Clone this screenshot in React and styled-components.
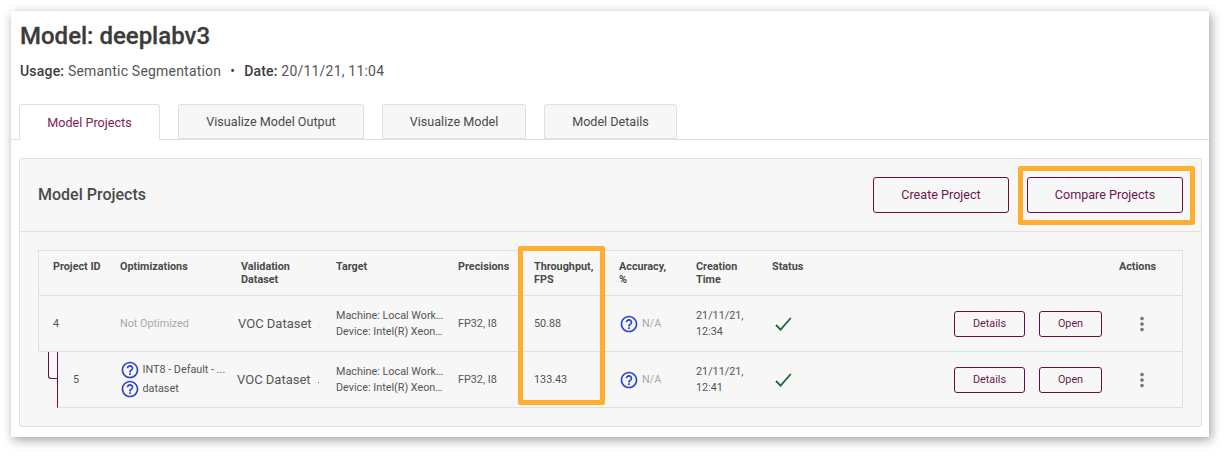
import styled, { createGlobalStyle } from 'styled-components'
import { MdHelpOutline, MdMoreVert } from 'react-icons/md'

const GlobalStyle = createGlobalStyle`
  html, body {
    margin: 0;
    padding: 0;
    background: #fff;
    font-family: Roboto, "Liberation Sans", sans-serif;
    color: #555;
  }
`

const Page = styled.div`
  position: relative;
  width: 1228px;
  height: 456px;
  padding: 11px 19px 0 11px;
  box-sizing: border-box;
  overflow: hidden;
`

const Card = styled.main`
  background: #fff;
  height: 426px;
  box-shadow: 2px 3px 10px rgba(0, 0, 0, 0.38);
  box-sizing: border-box;
`

const Header = styled.header`
  padding: 10px 9px 0;
  height: 93px;
  box-sizing: border-box;
`

const Title = styled.h1`
  margin: 0;
  font-size: 24px;
  line-height: 30px;
  font-weight: 500;
  color: #3c3c3c;
  -webkit-text-stroke: 0.3px #3c3c3c;
`

const Meta = styled.p`
  margin: 10px 0 0;
  font-size: 14px;
  line-height: 20px;
  letter-spacing: 0.2px;
  color: #555;

  b {
    font-weight: 500;
    color: #3c3c3c;
  }
`

const Bullet = styled.span`
  margin: 0 9px;
  color: #3c3c3c;
`

const Tabs = styled.nav`
  display: flex;
  gap: 18px;
  height: 35px;
  padding-left: 8px;
  border-bottom: 1px solid #e0e0e0;
`

const Tab = styled.div`
  width: ${p => p.$width}px;
  height: ${p => (p.$active ? 36 : 35)}px;
  padding-bottom: ${p => (p.$active ? 1 : 0)}px;
  box-sizing: border-box;
  display: flex;
  align-items: center;
  justify-content: center;
  font-size: 12.6px;
  color: ${p => (p.$active ? '#7d2456' : '#4a4a4a')};
  background: ${p => (p.$active ? '#fff' : '#f7f7f7')};
  border: 1px solid #e0e0e0;
  border-bottom: ${p => (p.$active ? 'none' : '1px solid #e0e0e0')};
  border-radius: 3px 3px 0 0;
`

const Panel = styled.section`
  margin: 18px 7px 0 8px;
  height: 269px;
  box-sizing: border-box;
  background: #f7f7f7;
  border: 1px solid #e0e0e0;
  border-radius: 3px;
`

const PanelHead = styled.div`
  display: flex;
  align-items: center;
  justify-content: space-between;
  height: 72px;
  padding: 0 18px;
  border-bottom: 1px solid #e0e0e0;
`

const PanelTitle = styled.h2`
  margin: 0 0 2px;
  font-size: 16px;
  font-weight: 500;
  color: #4a4a4a;
`

const ButtonRow = styled.div`
  display: flex;
  gap: ${p => p.$gap}px;
`

const Button = styled.button`
  width: ${p => p.$width}px;
  height: ${p => p.$height}px;
  padding: 0 0 1px;
  box-sizing: border-box;
  font-family: inherit;
  font-size: ${p => p.$size}px;
  color: #6b1a4a;
  background: transparent;
  border: 1px solid #6e0a44;
  border-radius: 3px;
`

const Table = styled.div`
  margin: 18px 18px 0;
  border-top: 1px solid #e0e0e0;
  border-right: 1px solid #e0e0e0;
`

const Row = styled.div`
  display: grid;
  grid-template-columns: ${p => p.$columns};
  height: ${p => p.$height}px;
  box-sizing: border-box;
  padding-left: 14px;
  border-left: 1px solid #e0e0e0;
  border-bottom: 1px solid #e0e0e0;
  font-size: 10.8px;
  line-height: 16px;
  align-items: center;
`

const HeadRow = styled(Row)`
  align-items: start;
  padding-top: 9px;
  font-weight: 700;
  color: #4a4a4a;
  line-height: 13px;
`

const ChildRow = styled(Row)`
  position: relative;
  margin-left: 19px;
  padding-left: 15px;
  border-left: 1px solid #6e0a44;

  &::before {
    content: '';
    position: absolute;
    left: -10px;
    top: 0;
    width: 9px;
    height: 27px;
    box-sizing: border-box;
    border-left: 1px solid #6e0a44;
    border-bottom: 1px solid #6e0a44;
    border-bottom-left-radius: 3px;
  }
`

const ActionsHead = styled.div`
  text-align: right;
  padding-right: 26px;
`

const Muted = styled.span`
  color: #a8a8a8;
`

const DatasetName = styled.div`
  position: relative;
  font-size: 13px;
  color: #555;
`

const Speck = styled.i`
  position: absolute;
  left: 81px;
  top: 10px;
  width: 1px;
  height: 1px;
  background: ${p => p.$color};
`

const Ellipsis = styled.div`
  width: 110px;
  white-space: nowrap;
  overflow: hidden;
  text-overflow: ellipsis;
`

const InfoLine = styled.div`
  display: flex;
  align-items: center;
  gap: 3px;
  height: ${p => p.$height}px;
`

const OptimizationList = styled.div`
  margin-left: -1.5px;
`

const Help = styled(MdHelpOutline)`
  flex: none;
  width: 20px;
  height: 20px;
  color: #2a45cf;
`

const CellActions = styled.div`
  display: flex;
  align-items: center;
  justify-content: flex-end;
`

const Kebab = styled.div`
  width: 80px;
  display: flex;
  justify-content: center;
  color: #757575;
  font-size: 22px;
`

const CheckMark = styled.svg`
  display: block;
  margin: 1px 0 0 3px;
`

const Check = () => (
  <CheckMark width="17" height="14" viewBox="0 0 17 14">
    <path d="M1 8 L5.6 12.6 L15.8 1" fill="none" stroke="#1c6b34" strokeWidth="1.8" />
  </CheckMark>
)

const Highlight = styled.div`
  position: absolute;
  left: ${p => p.$x}px;
  top: ${p => p.$y}px;
  width: ${p => p.$w}px;
  height: ${p => p.$h}px;
  box-sizing: border-box;
  border: 5px solid #ffae2f;
  border-radius: 2px;
  pointer-events: none;
`

const parentCols = '67px 118px 98px 122px 76px 85px 77px 76px 60px 1fr'
const childCols = '48px 116px 99px 122px 76px 85px 77px 76px 60px 1fr'
const headCols = '67px 121px 95px 122px 76px 85px 77px 76px 60px 1fr'

const RowActions = () => (
  <CellActions>
    <ButtonRow $gap={14}>
      <Button $width={71} $height={26} $size={10.8}>Details</Button>
      <Button $width={63} $height={26} $size={10.8}>Open</Button>
    </ButtonRow>
    <Kebab><MdMoreVert /></Kebab>
  </CellActions>
)

const TargetCell = () => (
  <div>
    <Ellipsis>Machine: Local Workstation</Ellipsis>
    <Ellipsis>Device: Intel(R) Xeon(R) Gold</Ellipsis>
  </div>
)

const Accuracy = () => (
  <InfoLine $height={20}>
    <Help />
    <Muted>N/A</Muted>
  </InfoLine>
)

export default function App() {
  return (
    <>
      <GlobalStyle />
      <Page>
        <Card>
          <Header>
            <Title>Model: deeplabv3</Title>
            <Meta>
              <b>Usage:</b> Semantic Segmentation<Bullet>•</Bullet><b>Date:</b> 20/11/21, 11:04
            </Meta>
          </Header>
          <Tabs>
            <Tab $width={141} $active>Model Projects</Tab>
            <Tab $width={186}>Visualize Model Output</Tab>
            <Tab $width={144}>Visualize Model</Tab>
            <Tab $width={133}>Model Details</Tab>
          </Tabs>
          <Panel>
            <PanelHead>
              <PanelTitle>Model Projects</PanelTitle>
              <ButtonRow $gap={18}>
                <Button $width={136} $height={36} $size={12.6}>Create Project</Button>
                <Button $width={156} $height={36} $size={12.6}>Compare Projects</Button>
              </ButtonRow>
            </PanelHead>
            <Table>
              <HeadRow $columns={headCols} $height={45}>
                <div>Project ID</div>
                <div>Optimizations</div>
                <div>Validation<br />Dataset</div>
                <div>Target</div>
                <div>Precisions</div>
                <div>Throughput,<br />FPS</div>
                <div>Accuracy,<br />%</div>
                <div>Creation<br />Time</div>
                <div>Status</div>
                <ActionsHead>Actions</ActionsHead>
              </HeadRow>
              <Row $columns={parentCols} $height={56}>
                <div>4</div>
                <Muted>Not Optimized</Muted>
                <DatasetName>VOC Dataset<Speck $color="#bfe3dc" /></DatasetName>
                <TargetCell />
                <div>FP32, I8</div>
                <div>50.88</div>
                <Accuracy />
                <div>21/11/21,<br />12:34</div>
                <Check />
                <RowActions />
              </Row>
              <ChildRow $columns={childCols} $height={56}>
                <div>5</div>
                <OptimizationList>
                  <InfoLine $height={18.5}><Help />INT8 - Default - ...</InfoLine>
                  <InfoLine $height={18.5}><Help />dataset</InfoLine>
                </OptimizationList>
                <DatasetName>VOC Dataset<Speck $color="#3f5fb0" /></DatasetName>
                <TargetCell />
                <div>FP32, I8</div>
                <div>133.43</div>
                <Accuracy />
                <div>21/11/21,<br />12:41</div>
                <Check />
                <RowActions />
              </ChildRow>
            </Table>
          </Panel>
        </Card>
        <Highlight $x={518} $y={246} $w={87} $h={159} />
        <Highlight $x={1018} $y={166} $w={177} $h={59} />
      </Page>
    </>
  )
}
